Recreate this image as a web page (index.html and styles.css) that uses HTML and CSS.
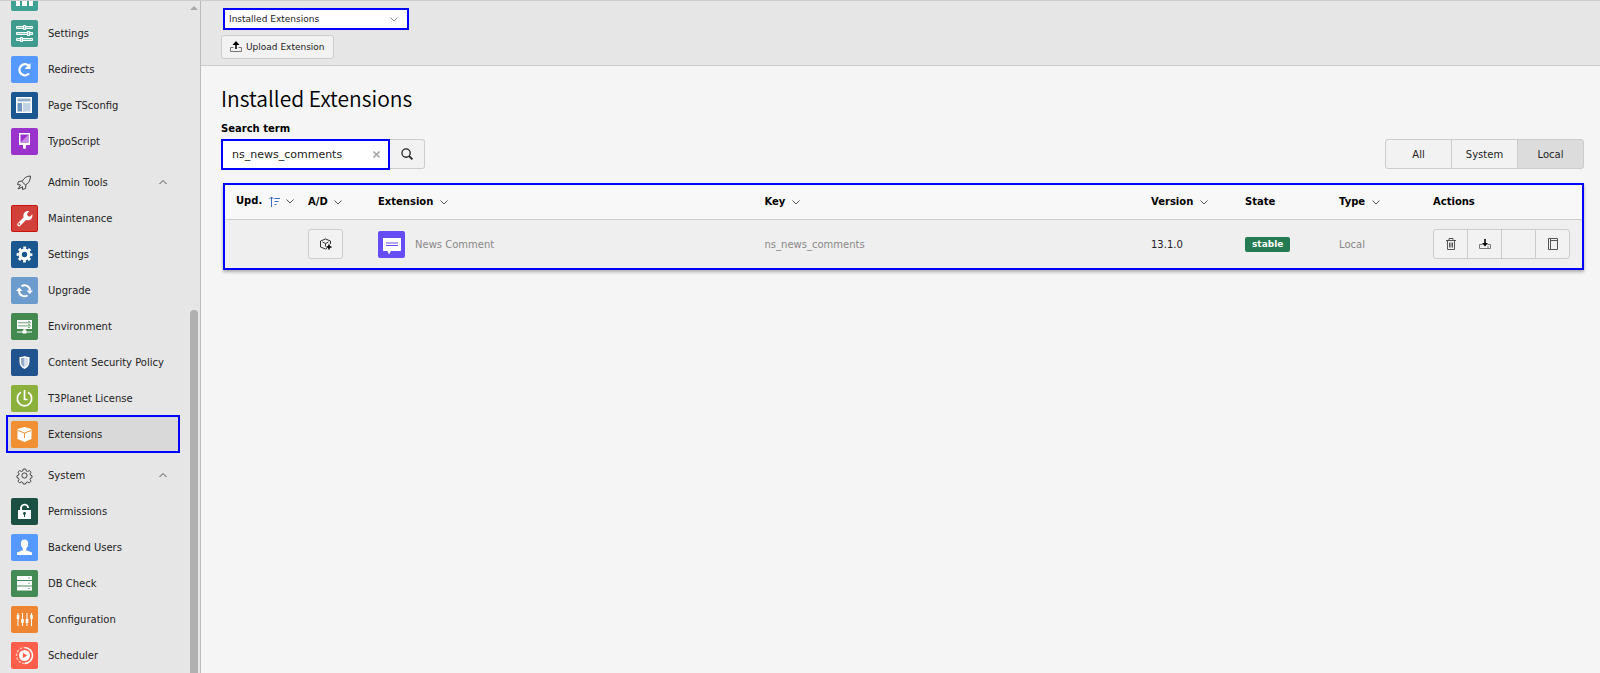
FILE: index.html
```
<!DOCTYPE html>
<html lang="en">
<head>
    <meta charset="UTF-8">
    <title>Installed Extensions</title>
    <link rel="stylesheet" href="styles.css">
</head>
<body>
    <div id="wrap">
        <aside class="sidebar">
            <nav class="menu">
                <ul>
                    <li><a href="#" aria-label="Sites">
                        <svg class="icon" viewBox="0 0 27 27"><rect width="27" height="27" rx="2" fill="#3fa193"/><path d="M5 5h17v17H5z" fill="#fff"/><path d="M10 8v14M17 8v14" stroke="#3fa193" stroke-width="2"/></svg></a></li>
                    <li><a href="#">
                        <svg class="icon" viewBox="0 0 27 27"><rect width="27" height="27" rx="2" fill="#3f9b8d"/><g fill="#8ecbc2" stroke="#fff"><path d="M5.500 6.500h16v2h-16zM5.500 12.500h16v2h-16zM5.500 18.500h16v2h-16z"/><path d="M12.500 5.500h2v4h-2zM16.500 11.500h2v4h-2zM9.500 17.500h2v4h-2z"/></g></svg>
                        <span>Settings</span></a></li>
                    <li><a href="#">
                        <svg class="icon" viewBox="0 0 27 27"><rect width="27" height="27" rx="2" fill="#5599ff"/><path d="M18 17.500A5.500 5.500 0 1 1 17.500 9.500" fill="none" stroke="#fff" stroke-width="2.400"/><path d="M19.500 7v6h-6z" fill="#fff"/></svg>
                        <span>Redirects</span></a></li>
                    <li><a href="#">
                        <svg class="icon" viewBox="0 0 27 27"><rect width="27" height="27" rx="2" fill="#1a568f"/><path d="M5 5h16v16H5z" fill="#fff"/><path d="M6.500 6.500h13v3h-13z" fill="#1a568f" opacity=".45"/><path d="M6.500 11h4.500v8.500H6.500z" fill="#6f97bd"/><path d="M12 11h7.500v8.500H12z" fill="#c0d2e4"/></svg>
                        <span>Page TSconfig</span></a></li>
                    <li><a href="#">
                        <svg class="icon" viewBox="0 0 27 27"><rect width="27" height="27" rx="2" fill="#9933cc"/><path d="M8 5h11v12h-4v2.500a1.500 1.500 0 0 1-3 0V17H8z" fill="#fff"/><path d="M9.500 6.500h8v8h-8z" fill="#9933cc"/><path d="M17.500 6.500v8h-8z" fill="#c68ae4"/></svg>
                        <span>TypoScript</span></a></li>
                </ul>
                <button type="button" class="group">
                    <svg class="icon" viewBox="0 0 27 27" fill="none" stroke="#444"><path d="M19.500 7c-4 0-6.500 2-8.500 5.500l3.500 3.500c3.500-2 5-5 5-9zM11 12l-3.500.500-1 3 3 .500M15 16l-.500 3.500-3 1v-3M9.500 16l-2.500 4 4.500-2"/></svg>
                    <span>Admin Tools</span>
                    <svg class="chevron" viewBox="0 0 8 8"><path d="M.500 6 4 2.500 7.500 6"/></svg>
                </button>
                <ul>
                    <li><a href="#">
                        <svg class="icon" viewBox="0 0 27 27"><rect width="27" height="27" rx="2" fill="#c8150f"/><rect x="1" y="1" width="25" height="25" rx="1" fill="#d2403a"/><path d="M8 19.500 15.500 12" stroke="#fff" stroke-width="3.600" stroke-linecap="round"/><path d="M18.300 6.300 16 8.700l.600 2.400 2.400.600 2.300-2.400a4.600 4.600 0 1 1-3-3z" fill="#fff"/><circle cx="8.300" cy="19" r=".900" fill="#d2403a"/></svg>
                        <span>Maintenance</span></a></li>
                    <li><a href="#">
                        <svg class="icon" viewBox="0 0 27 27"><rect width="27" height="27" rx="2" fill="#1a568f"/><circle cx="13.500" cy="13.500" r="4.400" fill="none" stroke="#fff" stroke-width="3.400"/><circle cx="13.500" cy="13.500" r="6.800" fill="none" stroke="#fff" stroke-width="2.200" stroke-dasharray="2.900 2.440" stroke-dashoffset="1.450"/></svg>
                        <span>Settings</span></a></li>
                    <li><a href="#">
                        <svg class="icon" viewBox="0 0 27 27"><rect width="27" height="27" rx="2" fill="#6c9bce"/><g fill="none" stroke="#fff" stroke-width="2"><path d="M10.500 9.300A5.300 5.300 0 0 1 19 13.500M16.500 18.200A5.300 5.300 0 0 1 8 14"/></g><path d="M15.500 13.500h6.500L18.800 17zM5 14h6.500L8.200 10.500z" fill="#fff"/></svg>
                        <span>Upgrade</span></a></li>
                    <li><a href="#">
                        <svg class="icon" viewBox="0 0 27 27"><rect width="27" height="27" rx="2" fill="#448a50"/><path d="M6 7h15v9H6zM12.500 16h2v2h-2zM6 18.500h15v1H6zM11.500 17.500h4v3h-4z" fill="#fff"/><path d="M7 9.800h13M7 12.900h13" stroke="#448a50" stroke-width=".800"/><path d="M17 8.400h2M17 11.400h2M17 14.400h2" stroke="#448a50" stroke-width=".700"/></svg>
                        <span>Environment</span></a></li>
                    <li><a href="#">
                        <svg class="icon" viewBox="0 0 27 27"><rect width="27" height="27" rx="2" fill="#21538f"/><path d="M8.500 8c2 0 3.500-.300 5-1 1.500.700 3 1 5 1v5c0 3.500-2 5.500-5 7-3-1.500-5-3.500-5-7z" fill="#fff"/><path d="M10 9.200c1.300 0 2.300-.200 3.500-.700v9.800c-2.200-1.200-3.500-2.800-3.500-5.300z" fill="#8fabca"/><path d="M17 9.200c-1.300 0-2.300-.200-3.500-.700v9.800c2.200-1.200 3.500-2.800 3.500-5.300z" fill="#d5e0ec"/></svg>
                        <span>Content Security Policy</span></a></li>
                    <li><a href="#">
                        <svg class="icon" viewBox="0 0 27 27"><rect width="27" height="27" rx="2" fill="#8bb03c"/><g fill="none" stroke="#fff" stroke-width="1.700"><path d="M10 7.300a7.200 7.200 0 1 0 7 0M13.500 5v10M13.500 14.500h3"/></g></svg>
                        <span>T3Planet License</span></a></li>
                    <li><a href="#" class="active">
                        <svg class="icon" viewBox="0 0 27 27"><rect width="27" height="27" rx="2" fill="#f18f33"/><path d="m13.500 6 7 2v10l-7 3-7-3V8z" fill="#fff"/><path d="m7 9.500 6.500 2.500L20 9.500M13.500 12v5" fill="none" stroke="#f18f33"/></svg>
                        <span>Extensions</span></a></li>
                </ul>
                <button type="button" class="group">
                    <svg class="icon" viewBox="0 0 27 27" fill="none" stroke="#444"><circle cx="13.500" cy="13.500" r="2.600"/><path d="m12.300 7 2.400 0 .500 1.900 1.400.600 1.800-1 1.600 1.700-1 1.700.600 1.400 1.400.400v2l-1.400.400-.600 1.400 1 1.700-1.600 1.700-1.800-1-1.400.600-.500 1.500h-2.400l-.500-1.500-1.400-.600-1.800 1L7 19.200l1-1.700-.600-1.400-1.400-.400v-2l1.400-.400.600-1.400-1-1.700 1.600-1.700 1.800 1 1.400-.600z"/></svg>
                    <span>System</span>
                    <svg class="chevron" viewBox="0 0 8 8"><path d="M.500 6 4 2.500 7.500 6"/></svg>
                </button>
                <ul>
                    <li><a href="#">
                        <svg class="icon" viewBox="0 0 27 27"><rect width="27" height="27" rx="2" fill="#1a4f42"/><path d="M7 12h13v9H7z" fill="#fff"/><path d="M10 12.500v-2a3.600 3.600 0 0 1 7.200-.500" fill="none" stroke="#fff" stroke-width="1.900"/><path d="M12 15.500a1.500 1.500 0 1 1 2 1.300V19h-1v-2.200a1.500 1.500 0 0 1-1-1.300z" fill="#1a4f42"/></svg>
                        <span>Permissions</span></a></li>
                    <li><a href="#">
                        <svg class="icon" viewBox="0 0 27 27"><rect width="27" height="27" rx="2" fill="#5599ff"/><path d="M13.500 5.500c2.500 0 3.700 1.700 3.700 4s-1 4-2 5v1.700l5.800 2.300v2.500H6v-2.500l5.800-2.300v-1.700c-1-1-2-2.700-2-5s1.200-4 3.700-4z" fill="#fff"/></svg>
                        <span>Backend Users</span></a></li>
                    <li><a href="#">
                        <svg class="icon" viewBox="0 0 27 27"><rect width="27" height="27" rx="2" fill="#448a56"/><path d="M6 6h15v4H6zM6 11h15v4.500H6zM6 16.500h15v4H6z" fill="#fff"/><path d="M17 8h2M17 13.200h2M17 18.500h2" stroke="#448a56" stroke-width=".600"/></svg>
                        <span>DB Check</span></a></li>
                    <li><a href="#">
                        <svg class="icon" viewBox="0 0 27 27"><rect width="27" height="27" rx="2" fill="#ee8532"/><path d="M7 7v13M11.500 7v13M16 7v13M20.500 7v13" stroke="#fff"/><path d="M5.700 9h2.600v4H5.700zM10.200 13h2.600v4h-2.600zM14.700 13h2.600v4h-2.600zM19.200 9h2.600v4h-2.600z" fill="#fff"/></svg>
                        <span>Configuration</span></a></li>
                    <li><a href="#">
                        <svg class="icon" viewBox="0 0 27 27"><rect width="27" height="27" rx="2" fill="#ff5f4a"/><circle cx="13.500" cy="13.500" r="5.500" fill="#fff"/><path d="m11.800 10.800 4.400 2.700-4.400 2.700z" fill="#ff5f4a"/><path d="M13.500 5.500a8 8 0 0 1 0 16" fill="none" stroke="#fff" stroke-width="1.600"/><path d="M13.500 21.500a8 8 0 0 1 0-16" fill="none" stroke="#ffc5bd" stroke-width="1.400" stroke-dasharray="2.500 1.500"/></svg>
                        <span>Scheduler</span></a></li>
                </ul>
            </nav>
            <div class="scrollbar">
                <div class="arrow"></div>
                <div class="thumb"></div>
            </div>
        </aside>
        <main>
            <header class="docheader">
                <div class="select">
                    <select aria-label="Module">
                        <option>Installed Extensions</option>
                    </select>
                    <svg class="chevron" viewBox="0 0 8 8"><path d="M.500 2.500 4 6 7.500 2.500"/></svg>
                </div>
                <button type="button" class="btn upload">
                    <svg width="12" height="12" viewBox="0 0 12 12"><path d="M3.500 6.500h-3v4h11v-4h-3" fill="none" stroke="#777"/><path d="M6 8V3" stroke="#000" stroke-width="1.600"/><path d="M6 0 9.500 4h-7z"/></svg>
                    Upload Extension
                </button>
            </header>
            <section class="content">
                <h1>Installed Extensions</h1>
                <label for="term">Search term</label>
                <div class="toolbar">
                    <form class="search">
                        <div class="field">
                            <input type="text" id="term" value="ns_news_comments">
                            <button type="button" class="clear" aria-label="Clear"><svg width="7" height="7" viewBox="0 0 7 7"><path d="m.500.500 6 6m0-6-6 6" stroke="#aaa" stroke-width="1.600"/></svg></button>
                        </div>
                        <button type="button" class="btn go" aria-label="Search"><svg width="12" height="12" viewBox="0 0 13 13" fill="none" stroke="#222"><circle cx="5.500" cy="5.500" r="4.500" stroke-width="1.400"/><path d="m8.800 8.800 3.500 3.500" stroke-width="2"/></svg></button>
                    </form>
                    <div class="btn-group filter">
                        <button type="button" class="btn">All</button>
                        <button type="button" class="btn">System</button>
                        <button type="button" class="btn on">Local</button>
                    </div>
                </div>
                <table>
                    <colgroup>
                        <col class="c-upd"><col class="c-ad"><col><col><col class="c-mid"><col class="c-mid"><col class="c-mid"><col class="c-act">
                    </colgroup>
                    <thead>
                        <tr>
                            <th>Upd. <svg class="sort" viewBox="0 0 11 11"><path d="M2.500 11V1M.500 3l2-2 2 2M5.500 2.500H11M5.500 5.500h4M5.500 8.500h2"/></svg> <svg class="chevron" viewBox="0 0 8 8"><path d="M.500 2.500 4 6 7.500 2.500"/></svg></th>
                            <th>A/D <svg class="chevron" viewBox="0 0 8 8"><path d="M.500 2.500 4 6 7.500 2.500"/></svg></th>
                            <th>Extension <svg class="chevron" viewBox="0 0 8 8"><path d="M.500 2.500 4 6 7.500 2.500"/></svg></th>
                            <th>Key <svg class="chevron" viewBox="0 0 8 8"><path d="M.500 2.500 4 6 7.500 2.500"/></svg></th>
                            <th>Version <svg class="chevron" viewBox="0 0 8 8"><path d="M.500 2.500 4 6 7.500 2.500"/></svg></th>
                            <th>State</th>
                            <th>Type <svg class="chevron" viewBox="0 0 8 8"><path d="M.500 2.500 4 6 7.500 2.500"/></svg></th>
                            <th>Actions</th>
                        </tr>
                    </thead>
                    <tbody>
                        <tr>
                            <td></td>
                            <td><button type="button" class="btn square" aria-label="Activate"><svg width="12" height="12" viewBox="0 0 12 12" fill="none" stroke="#333"><path d="M7 10.500 5.500 11 .500 9V3l5-2 5 2v3M2.500 4l3 1.500 3-1.500M5.500 5.500v3"/><path d="M9 6.500v5M6.500 9h5" stroke="#000" stroke-width="1.600"/></svg></button></td>
                            <td>
                                <div class="ext">
                                    <svg class="icon" viewBox="0 0 27 27"><rect width="27" height="27" rx="2" fill="#654cf5"/><path d="M5 7h18v13H13l-2 3.500L9.500 20H5z" fill="#fff"/><path d="M8 12h12M8 14.500h12" stroke="#654cf5" stroke-width="1.200"/></svg>
                                    <span>News Comment</span>
                                </div>
                            </td>
                            <td>ns_news_comments</td>
                            <td class="dark">13.1.0</td>
                            <td><span class="badge">stable</span></td>
                            <td>Local</td>
                            <td>
                                <div class="btn-group actions">
                                    <button type="button" class="btn" aria-label="Remove"><svg width="12" height="12" viewBox="0 0 12 12" fill="none" stroke="#444"><path d="M1 2.500h10M4 2.500v-2h4v2M2.500 2.500v9h7v-9M4.500 4.500v5M6 4.500v5M7.500 4.500v5" stroke-width=".900"/></svg></button>
                                    <button type="button" class="btn" aria-label="Download"><svg width="12" height="12" viewBox="0 0 12 12"><path d="M3.500 6.500h-3v4h11v-4h-3M8 9h2" fill="none" stroke="#777"/><path d="M6 1v5" stroke="#000" stroke-width="1.600"/><path d="M6 8.500 9 5H3z"/></svg></button>
                                    <button type="button" class="btn" aria-label="Settings"></button>
                                    <button type="button" class="btn" aria-label="Documentation"><svg width="12" height="12" viewBox="0 0 12 12" fill="none" stroke="#555"><path d="M1.500.500h9v11h-9zM3.500.500v11M3.500 2.500h7"/></svg></button>
                                </div>
                            </td>
                        </tr>
                    </tbody>
                </table>
            </section>
        </main>
    </div>
</body>
</html>
```
FILE: styles.css
```
*{margin:0;padding:0;box-sizing:border-box;}
html,body{width:100%;height:100%;}
body,button,input,select{font-family:"DejaVu Sans",Verdana,sans-serif;font-size:10px;color:#222;}
button{cursor:pointer;}
svg{display:block;flex:none;}
ul{list-style:none;}
#wrap{
    display:flex;
    width:100%;
    height:100vh;
    overflow:hidden;
    border-top:1px solid #ccc;
    background:#f5f5f5;
}

/* module menu, scrolled to its end */
.sidebar{
    display:flex;
    flex:none;
    width:201px;
    background:#e6e6e6;
    border-right:1px solid #bbb;
}
.menu{
    display:flex;
    flex-direction:column;
    justify-content:flex-end;
    flex:1;
    min-height:0;
    overflow:hidden;
    padding:0 11px 0 7px;
}
.menu a,.group{
    display:flex;
    align-items:center;
    gap:10px;
    width:100%;
    height:36px;
    padding:0 4px;
    color:#222;
    text-decoration:none;
}
.menu ul,.group{flex:none;}
.menu .active{background:#d9d9d9;outline:2px solid #00f;outline-offset:-1px;}
.group{border:0;background:none;margin-top:5px;text-align:left;}
.group span{flex:1;}
.group .chevron{margin-right:8px;}
.icon{width:27px;height:27px;}
.chevron{width:8px;height:8px;fill:none;stroke:#555;}
.scrollbar{display:flex;flex-direction:column;justify-content:space-between;width:10px;}
.arrow{
    width:8px;
    margin-top:5px;
    border:4px solid transparent;
    border-top:0;
    border-bottom-color:#aaa;
}
.thumb{width:8px;height:54%;background:#b0b0b0;border-radius:4px 4px 0 0;}

main{flex:1;min-width:0;}
.docheader{
    height:65px;
    padding:7px 20px 0;
    background:#e6e6e6;
    border-bottom:1px solid #ccc;
}
.btn{
    display:flex;
    align-items:center;
    justify-content:center;
    border:1px solid #ccc;
    border-radius:3px;
    background:#f2f2f2;
}
.select{position:relative;width:186px;margin-left:2px;}
.select select{
    display:block;
    width:100%;
    height:22px;
    padding:0 4px;
    border:2px solid #00f;
    background:#fff;
    appearance:none;
    font-size:9px;
}
.select .chevron{position:absolute;right:11px;top:7px;stroke:#888;}
.upload{gap:4px;height:24px;margin-top:5px;padding:0 8px;font-size:9px;}

.content{padding:17px 16px 0 20px;}
h1{
    font-family:"Noto Sans CJK JP","Noto Sans",sans-serif;
    font-size:21px;
    font-weight:350;
    line-height:30px;
    color:#000;
}
label{display:block;margin-top:7px;line-height:18px;font-weight:bold;color:#000;}
.toolbar{display:flex;justify-content:space-between;margin-top:1px;}
.search{display:flex;}
.field{position:relative;width:169px;}
.field input{
    display:block;
    width:100%;
    height:31px;
    padding:0 24px 0 9px;
    border:2px solid #00f;
    background:#fff;
    font-size:11px;
}
.clear{position:absolute;right:10px;top:12px;border:0;background:none;}
.go{width:35px;height:30px;border-left:0;border-radius:0 3px 3px 0;}
.btn-group{display:flex;}
.btn-group .btn{border-radius:0;margin-left:-1px;}
.btn-group .btn:first-child{margin-left:0;border-radius:3px 0 0 3px;}
.btn-group .btn:last-child{border-radius:0 3px 3px 0;}
.filter .btn{width:67px;height:30px;}
.filter .on{background:#dcdcdc;}

table{
    width:calc(100% - 2px);
    margin:13px 0 0 2px;
    table-layout:fixed;
    border-spacing:0;
    border:2px solid #00f;
    box-shadow:0 2px 3px rgba(0,0,0,.3);
}
.c-upd{width:71px;}
.c-ad{width:70px;}
.c-mid{width:94px;}
.c-act{width:161px;}
th,td{padding:0 0 0 12px;text-align:left;}
th{
    height:35px;
    padding-bottom:2px;
    background:#f8f8f8;
    border-bottom:1px solid #ccc;
    color:#000;
    white-space:nowrap;
}
th:first-child{padding-left:11px;}
th svg{display:inline-block;vertical-align:middle;margin-left:3px;}
.sort{width:11px;height:11px;fill:none;stroke:#3a6fc4;}
td{height:48px;background:#efefef;color:#888;}
td.dark{color:#222;}
.square{width:35px;height:30px;}
.ext{display:flex;align-items:center;gap:10px;}
.badge{
    display:inline-block;
    padding:0 7px;
    line-height:15px;
    border-radius:2px;
    background:#247a52;
    color:#fff;
    font-size:9px;
    font-weight:bold;
}
.actions .btn{width:35px;height:30px;}
```
